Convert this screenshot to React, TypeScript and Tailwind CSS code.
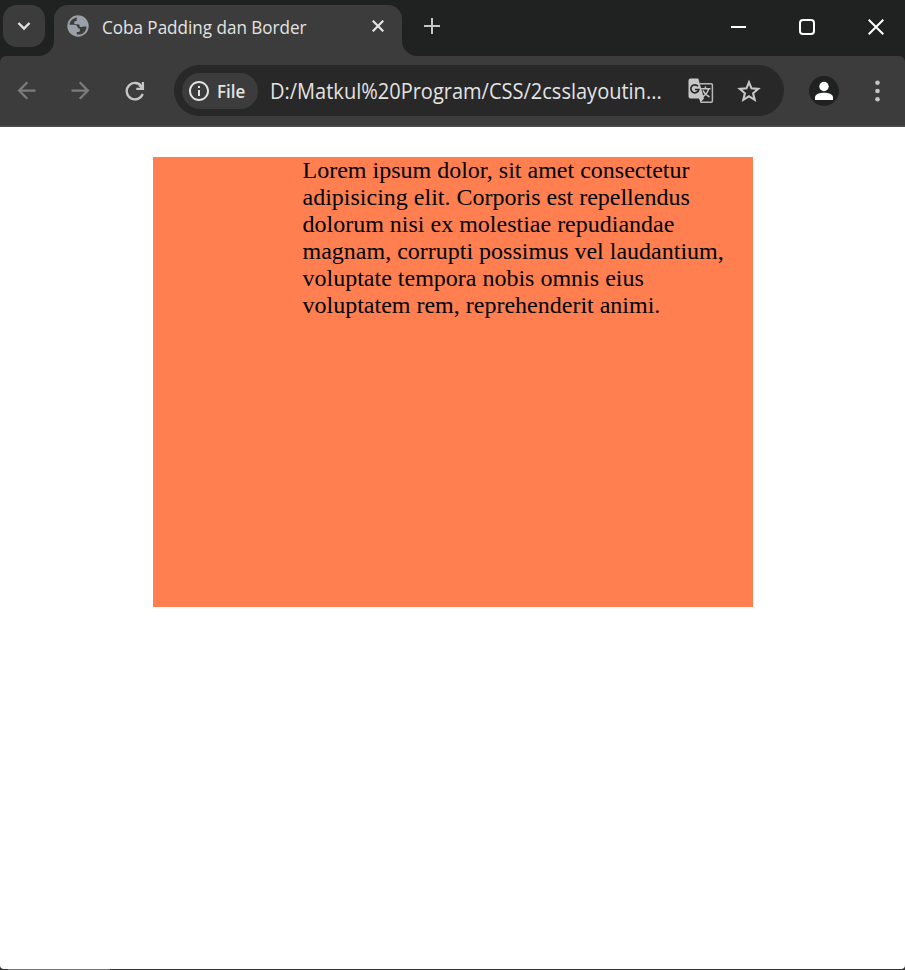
import React from "react";
import { MdArrowBack, MdArrowForward, MdInfoOutline } from "react-icons/md";

function Globe() {
  return (
    <svg className="block h-[22px] w-[22px]" viewBox="0 0 22 22">
      <circle cx="11" cy="11" r="10.7" fill="#9aa0a8" />
      <path
        fill="#3c3c3c"
        d="M2.500 9.700C3 5.700 6.200 2.900 10.300 2.400c-.8.9-.7 2-.5 3.300-1.700 0-2.700.9-2.700 2 0 1 .9 1.500 2.300 1.500 2.300 0 3.300.3 3.300 1.700 0 .8.300 1.200 1 1.200 1.500 0 2.200-.7 3.200-.7h2.600c0 4.600-3.300 8.100-7.700 8.200-.9 0-1.500-.100-2-.300v-2.200h1.400c1.100 0 1.600-.5 1.600-1.500 0-.8.2-1.100.1-1.500-.2-.7-.9-.9-2-.9-.1-2.300-1.500-3.500-3.900-3.500Z"
      />
    </svg>
  );
}

function RefreshIcon() {
  return (
    <svg className="ml-[31px] h-5 w-5 shrink-0" viewBox="0 0 20 20" fill="none" stroke="#c7c7c7" strokeWidth="2.300">
      <path d="M17.700 12.800A8.200 8.200 0 1 1 16.600 5.400" />
      <path d="M17.900 1v6.800H11.300" />
      <path d="m14 4 3.800 3.500" />
    </svg>
  );
}

function TranslateIcon() {
  return (
    <svg className="h-[26px] w-[26px] shrink-0" viewBox="0 0 26 26">
      <path d="M12 5.800h11.200a1.200 1.200 0 0 1 1.200 1.200v16a1.200 1.200 0 0 1-1.200 1.200H12.500" fill="none" stroke="#b8b8b8" strokeWidth="1.500" />
      <path d="M2.500.500h7.800l5.700 19.900-3.500 4-1.500-4H2.500a2 2 0 0 1-2-2v-15.900a2 2 0 0 1 2-2Z" fill="#c7c7c7" />
      <path d="M10 8.300A4 4 0 1 0 10.800 11.500H7" fill="none" stroke="#282828" strokeWidth="1.700" />
      <path d="M13.200 10.700h9.300M17.400 8.500v2.200M20.600 10.700c-.6 3.300-2.600 6-5.700 8M15 12.500c1.300 2.900 3.300 4.700 6.500 6.500" fill="none" stroke="#c7c7c7" strokeWidth="1.500" />
    </svg>
  );
}

function StarIcon() {
  return (
    <svg className="ml-[23px] h-6 w-6 shrink-0" viewBox="0 0 24 24" fill="none" stroke="#c7c7c7" strokeWidth="2.100">
      <path d="m12 3.300 2.500 6 6.700.600-5.100 4.400 1.600 6.500-5.700-3.500-5.700 3.500 1.600-6.500-5.100-4.400 6.700-.600Z" />
    </svg>
  );
}

function TabStrip() {
  return (
    <div className="flex h-14 bg-[#202221]">
      <div className="ml-[3px] mt-[5px] flex h-[42px] w-[42px] items-center justify-center rounded-[14px] bg-[#3c3c3c]">
        <svg className="h-[14px] w-[14px]" viewBox="0 0 14 14" fill="none" stroke="#e3e3e3" strokeWidth="2.300">
          <path d="M1.500 4 7 9.500l5.500-5.500" />
        </svg>
      </div>
      <svg className="-ml-[6px] mt-[41px] h-[15px] w-[15px]" viewBox="0 0 15 15">
        <path d="M15 0v15H0C8 15 15 8 15 0Z" fill="#3c3c3c" />
      </svg>
      <div className="mt-[5px] flex h-[51px] w-[348px] items-start rounded-t-[14px] bg-[#3c3c3c] pl-[13px]">
        <div className="mt-[10px]"><Globe /></div>
        <div className="ml-[13px] mt-[10px] w-[270px] whitespace-nowrap text-[18px] leading-[25px] text-[#e3e3e3] [font-family:'Open_Sans','Noto_Sans',sans-serif]">
          <span className="inline-block origin-left scale-x-[0.948]">Coba Padding dan Border</span>
        </div>
        <svg className="mt-[15px] h-3 w-3" viewBox="0 0 12 12" fill="none" stroke="#e3e3e3" strokeWidth="2.200">
          <path d="m.7.700 10.600 10.600M11.300.700.7 11.300" />
        </svg>
      </div>
      <svg className="mt-[41px] h-[15px] w-[15px]" viewBox="0 0 15 15">
        <path d="M0 0v15h15C7 15 0 8 0 0Z" fill="#3c3c3c" />
      </svg>
      <svg className="ml-[7px] mt-[18px] h-4 w-4" viewBox="0 0 16 16" fill="none" stroke="#c7c7c7" strokeWidth="2">
        <path d="M8 0v16M0 8h16" />
      </svg>
      <div className="ml-auto mr-[21px] mt-[19px] flex h-4 items-center">
        <div className="h-[2px] w-[15px] bg-white" />
        <div className="ml-[53px] h-4 w-4 rounded-[4px] border-2 border-white" />
        <svg className="ml-[53px] h-4 w-4" viewBox="0 0 16 16" fill="none" stroke="white" strokeWidth="2">
          <path d="m.7.700 14.600 14.600M15.300.700.7 15.300" />
        </svg>
      </div>
    </div>
  );
}

function Toolbar() {
  return (
    <div className="bg-[#202221]">
      <div className="flex h-[71px] items-center rounded-t-[6px] border-b-2 border-[#494949] bg-[#3c3c3c] pl-[13px]">
        <MdArrowBack className="h-[27px] w-[27px] shrink-0 text-[#7c7c7c]" />
        <MdArrowForward className="ml-[27px] h-[27px] w-[27px] shrink-0 text-[#7c7c7c]" />
        <RefreshIcon />
        <div className="ml-[29px] flex h-[51px] w-[610px] shrink-0 items-center rounded-full bg-[#282828] pl-2">
          <div className="flex h-9 w-[76px] items-center rounded-full bg-[#3c3c3c] pl-[6px]">
            <MdInfoOutline className="-ml-px h-6 w-6 shrink-0 text-[#e3e3e3]" />
            <span className="ml-[6px] inline-block origin-left scale-x-[0.940] text-[18px] font-semibold leading-6 text-[#e3e3e3] [font-family:'Open_Sans','Noto_Sans',sans-serif]">File</span>
          </div>
          <div className="ml-[12px] w-[418px] whitespace-nowrap text-[21px] leading-[30px] text-[#e3e3e3] [font-family:'Open_Sans','Noto_Sans',sans-serif]">
            <span className="inline-block origin-left scale-x-[0.953]">D:/Matkul%20Program/CSS/2csslayoutin...</span>
          </div>
          <TranslateIcon />
          <StarIcon />
        </div>
        <svg className="ml-[25px] h-[30px] w-[30px] shrink-0" viewBox="0 0 30 30">
          <circle cx="15" cy="15" r="15" fill="#202221" />
          <circle cx="15" cy="10.500" r="4.700" fill="white" />
          <path d="M6 24v-2.500C6 18 11 16.700 15 16.700s9 1.300 9 4.800V24Z" fill="white" />
        </svg>
        <svg className="ml-[35px] h-[22px] w-[6px] shrink-0 fill-[#c7c7c7]" viewBox="0 0 6 22">
          <circle cx="3.500" cy="2.700" r="2.300" /><circle cx="3.500" cy="11" r="2.300" /><circle cx="3.500" cy="19.300" r="2.300" />
        </svg>
      </div>
    </div>
  );
}

export default function App() {
  return (
    <div className="flex h-[970px] w-[905px] flex-col overflow-hidden bg-[#333]">
      <TabStrip />
      <Toolbar />
      <main className="h-[842px] rounded-b-[4px] bg-white pt-[30px]">
        <div className="ml-[153px] h-[450px] w-[600px] bg-[coral] pl-[149.500px]">
          <p className="w-[450px] text-[24px] leading-[27px] text-black [font-family:'Liberation_Serif',serif]">
            Lorem ipsum dolor, sit amet consectetur<br />
            adipisicing elit. Corporis est repellendus<br />
            dolorum nisi ex molestiae repudiandae<br />
            magnam, corrupti possimus vel laudantium,<br />
            voluptate tempora nobis omnis eius<br />
            voluptatem rem, reprehenderit animi.
          </p>
        </div>
      </main>
      <div className="h-px w-full bg-[linear-gradient(to_right,#333_8px,#777_8px,#777_110px,#333_110px)]" />
    </div>
  );
}
